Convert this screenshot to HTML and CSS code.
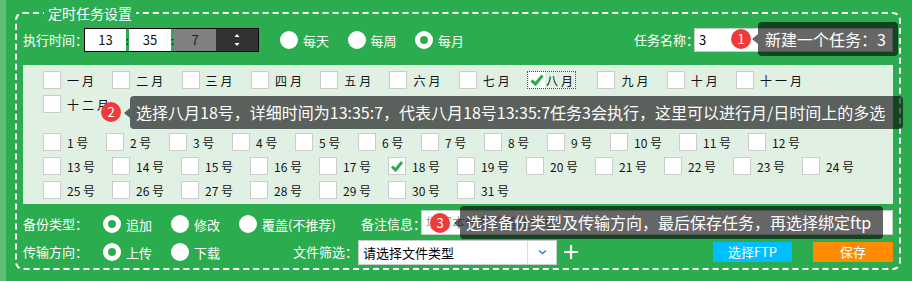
FILE: index.html
```
<!DOCTYPE html>
<html lang="zh-CN">
<head>
    <meta charset="UTF-8">
    <title>定时任务设置</title>
    <link rel="stylesheet" href="styles.css">
</head>
<body>
<div class="page">
    <div class="stripe"></div>

    <fieldset class="task-box">
        <legend>定时任务设置</legend>

        <!-- Time + frequency + name -->
        <div class="top-row">
            <span class="lbl lbl-time">执行时间：</span>
            <div class="time-box">
                <span class="seg">13</span><span class="sep">:</span><span class="seg">35</span><span class="sep">:</span><span class="seg gray">7</span>
                <span class="spin">
                    <svg width="42" height="22" viewBox="0 0 42 22"><path d="M21 5 L23.5 8 L18.5 8 Z" fill="#fff"/><path d="M21 17 L23.5 14 L18.5 14 Z" fill="#fff"/></svg>
                </span>
            </div>
            <div class="freq">
                <label class="opt"><span class="radio"></span>每天</label>
                <label class="opt"><span class="radio"></span>每周</label>
                <label class="opt"><span class="radio on"></span>每月</label>
            </div>
            <span class="lbl lbl-name">任务名称：</span>
            <div class="field name-field">3</div>
        </div>

        <!-- Month / day picker -->
        <div class="date-panel">
            <div class="chk-row">
                <label class="month"><span class="box"></span>一月</label>
                <label class="month"><span class="box"></span>二月</label>
                <label class="month"><span class="box"></span>三月</label>
                <label class="month"><span class="box"></span>四月</label>
                <label class="month"><span class="box"></span>五月</label>
                <label class="month"><span class="box"></span>六月</label>
                <label class="month"><span class="box"></span>七月</label>
                <label class="month focus"><span class="box on"><svg width="16" height="16" viewBox="0 0 16 16"><path d="M2.5 8.5 L6.5 12 L13.5 3.5" fill="none" stroke="#2bad4f" stroke-width="3"/></svg></span>八月</label>
                <label class="month"><span class="box"></span>九月</label>
                <label class="month"><span class="box"></span>十月</label>
                <label class="month"><span class="box"></span>十一月</label>
            </div>
            <div class="chk-row">
                <label class="month"><span class="box"></span>十二月</label>
            </div>

            <div class="days">
                <div class="chk-row">
                    <label class="day"><span class="box"></span>1 号</label>
                    <label class="day"><span class="box"></span>2 号</label>
                    <label class="day"><span class="box"></span>3 号</label>
                    <label class="day"><span class="box"></span>4 号</label>
                    <label class="day"><span class="box"></span>5 号</label>
                    <label class="day"><span class="box"></span>6 号</label>
                    <label class="day"><span class="box"></span>7 号</label>
                    <label class="day"><span class="box"></span>8 号</label>
                    <label class="day"><span class="box"></span>9 号</label>
                    <label class="day dd"><span class="box"></span>10 号</label>
                    <label class="day dd"><span class="box"></span>11 号</label>
                    <label class="day dd"><span class="box"></span>12 号</label>
                </div>
                <div class="chk-row">
                    <label class="day dd"><span class="box"></span>13 号</label>
                    <label class="day dd"><span class="box"></span>14 号</label>
                    <label class="day dd"><span class="box"></span>15 号</label>
                    <label class="day dd"><span class="box"></span>16 号</label>
                    <label class="day dd"><span class="box"></span>17 号</label>
                    <label class="day dd"><span class="box on"><svg width="16" height="16" viewBox="0 0 16 16"><path d="M3 8.5 L6.5 12 L13 4" fill="none" stroke="#2bad4f" stroke-width="3"/></svg></span>18 号</label>
                    <label class="day dd"><span class="box"></span>19 号</label>
                    <label class="day dd"><span class="box"></span>20 号</label>
                    <label class="day dd"><span class="box"></span>21 号</label>
                    <label class="day dd"><span class="box"></span>22 号</label>
                    <label class="day dd"><span class="box"></span>23 号</label>
                    <label class="day dd"><span class="box"></span>24 号</label>
                </div>
                <div class="chk-row">
                    <label class="day dd"><span class="box"></span>25 号</label>
                    <label class="day dd"><span class="box"></span>26 号</label>
                    <label class="day dd"><span class="box"></span>27 号</label>
                    <label class="day dd"><span class="box"></span>28 号</label>
                    <label class="day dd"><span class="box"></span>29 号</label>
                    <label class="day dd"><span class="box"></span>30 号</label>
                    <label class="day dd"><span class="box"></span>31 号</label>
                </div>
            </div>
        </div>

        <!-- Backup type + note -->
        <div class="opt-row first">
            <span class="lbl lbl-row">备份类型：</span>
            <div class="opts backup">
                <label class="opt"><span class="radio on"></span>追加</label>
                <label class="opt"><span class="radio"></span>修改</label>
                <label class="opt"><span class="radio"></span>覆盖(不推荐)</label>
            </div>
            <span class="lbl lbl-note">备注信息：</span>
            <div class="field note-field">填写本任务的备注信息</div>
        </div>

        <!-- Direction + filter + buttons -->
        <div class="opt-row">
            <span class="lbl lbl-row">传输方向：</span>
            <div class="opts dir">
                <label class="opt"><span class="radio on"></span>上传</label>
                <label class="opt"><span class="radio"></span>下载</label>
            </div>
            <span class="lbl lbl-filter">文件筛选：</span>
            <div class="select">
                <span class="select-text">请选择文件类型</span>
                <span class="select-arrow">
                    <svg width="9" height="6" viewBox="0 0 9 6"><path d="M1 1.5 L4.5 4.5 L8 1.5" fill="none" stroke="#3b7fd6" stroke-width="1.5"/></svg>
                </span>
            </div>
            <svg class="plus" width="16" height="16" viewBox="0 0 16 16"><path d="M8 1 V15 M1 8 H15" stroke="#fff" stroke-width="2.2"/></svg>
            <button class="btn btn-ftp">选择FTP</button>
            <button class="btn btn-save">保存</button>
        </div>
    </fieldset>

    <!-- Guide tooltips -->
    <span class="badge b1">1</span>
    <div class="tip t1">新建一个任务：3</div>
    <span class="badge b2">2</span>
    <div class="tip t2">选择八月18号，详细时间为13:35:7，代表八月18号13:35:7任务3会执行，这里可以进行月/日时间上的多选</div>
    <span class="badge b3">3</span>
    <div class="tip t3">选择备份类型及传输方向，最后保存任务，再选择绑定ftp</div>
</div>
</body>
</html>
```

FILE: styles.css
```
* {
    margin: 0;
    padding: 0;
    box-sizing: border-box;
}

body {
    font-family: "Microsoft YaHei", "Noto Sans CJK SC", sans-serif;
    font-size: 13px;
    color: white;
    background-color: #2bad4f;
}

.page {
    position: relative;
    display: flex;
    width: 912px;
    height: 281px;
    overflow: hidden;
}

.stripe {
    width: 6px;
    background-color: #5ebf78;
}

/* Dashed group box */
.task-box {
    flex: 1;
    min-width: 0;
    margin: 3px 11px 0 9px;
    padding: 2px 6px 2px;
    border: 2px dashed white;
    border-radius: 8px;
    align-self: flex-start;
}

.task-box legend {
    margin-left: 21px;
    padding: 0 4px;
    font-size: 14px;
    line-height: 20px;
}

.lbl {
    white-space: nowrap;
    line-height: 20px;
}

/* Top row */
.top-row {
    display: flex;
    align-items: center;
    height: 30px;
}

.lbl-time {
    width: 61px;
}

.time-box {
    display: flex;
    width: 175px;
    height: 24px;
    border: 1px solid black;
    background-color: #2bad4f;
}

.seg {
    width: 42px;
    background-color: white;
    color: #111;
    text-align: center;
    line-height: 22px;
}

.seg:first-child {
    width: 41px;
}

.seg.gray {
    background-color: #808080;
    color: #222;
}

.sep {
    width: 3px;
    color: black;
    font-size: 11px;
    line-height: 22px;
    display: flex;
    justify-content: center;
}

.spin {
    width: 42px;
    background-color: #333;
    display: flex;
}

.freq {
    display: flex;
    margin-left: 21px;
}

.freq .opt {
    width: 67.5px;
}

.opt {
    display: flex;
    align-items: center;
    white-space: nowrap;
}

.radio {
    width: 18px;
    height: 18px;
    border-radius: 50%;
    background-color: white;
    margin-right: 5px;
    flex-shrink: 0;
}

.radio.on {
    background-color: transparent;
    border: 5px solid white;
}

.lbl-name {
    margin-left: auto;
    width: 60px;
}

.field {
    height: 24px;
    background-color: white;
    border: 1px solid #ccc;
    color: black;
    padding-left: 4px;
    line-height: 22px;
}

.name-field {
    width: 199px;
}

/* Month / day panel */
.date-panel {
    margin-top: 10px;
    padding: 3px 20px 2px;
    background-color: #e0f1e4;
    color: #111;
    font-size: 12px;
}

.chk-row {
    display: flex;
    height: 24px;
    align-items: center;
}

.days {
    margin-top: 14px;
}

.month, .day {
    display: flex;
    align-items: center;
    white-space: nowrap;
    height: 18px;
}

.month {
    width: 69.3px;
    letter-spacing: 3px;
}

.day {
    width: 63px;
}

.day.dd {
    width: 69px;
}

.box {
    width: 18px;
    height: 18px;
    border: 1px solid #ccc;
    background-color: white;
    margin-right: 6px;
    flex-shrink: 0;
    display: flex;
    align-items: center;
    justify-content: center;
}

/* focused month item: dotted outline round box + label */
.month.focus {
    width: 47px;
    height: 16px;
    margin-right: 22.3px;
    outline: 1px dotted #555;
}

.month.focus .box {
    width: 16px;
    height: 16px;
    margin: 0 1px;
    border: none;
}

/* Bottom rows */
.opt-row {
    display: flex;
    align-items: center;
    height: 28px;
}

.opt-row.first {
    margin-top: 6px;
}

.lbl-row {
    width: 80px;
}

.opts {
    display: flex;
}

.opts .opt {
    width: 68px;
}

.opts.backup {
    width: 258px;
}

.opts.dir {
    width: 190px;
}

.lbl-note {
    width: 60px;
}

.note-field {
    flex: 1;
    height: 25px;
    margin-top: -4px;
    color: #999;
}

.lbl-filter {
    width: 65px;
}

.select {
    display: flex;
    width: 199px;
    height: 25px;
    background-color: white;
    border: 1px solid #ccc;
    color: black;
}

.select-text {
    flex: 1;
    padding-left: 4px;
    line-height: 23px;
}

.select-arrow {
    width: 29px;
    border-left: 1px solid #ddd;
    display: flex;
    align-items: center;
    justify-content: center;
}

.plus {
    margin-left: 6px;
}

.btn {
    height: 20px;
    border: none;
    color: white;
    font-family: inherit;
    font-size: 13px;
    line-height: 20px;
}

.btn-ftp {
    width: 79px;
    margin-left: auto;
    background-color: #00bfff;
}

.btn-save {
    width: 80px;
    margin-left: 21px;
    background-color: #ff8c00;
}

/* Guide tooltips and number badges */
.tip {
    position: absolute;
    background-color: rgba(0, 0, 0, 0.6);
    border-radius: 4px;
    font-size: 16px;
    white-space: nowrap;
    color: white;
    padding-left: 6px;
}

.tip::before {
    content: "";
    position: absolute;
    left: -6px;
    top: 50%;
    margin-top: -5px;
    border-top: 5px solid transparent;
    border-bottom: 5px solid transparent;
    border-right: 6px solid rgba(0, 0, 0, 0.6);
}

.t1 {
    left: 758px;
    top: 22px;
    width: 140px;
    height: 34px;
    line-height: 34px;
    padding-left: 7px;
}

.t2 {
    left: 130px;
    top: 96px;
    width: 773px;
    height: 33px;
    line-height: 33px;
}

.t3 {
    left: 460px;
    top: 206px;
    width: 423px;
    height: 33px;
    line-height: 33px;
}

.badge {
    position: absolute;
    width: 20px;
    height: 20px;
    border-radius: 50%;
    background-color: #f03a3a;
    color: white;
    font-size: 13px;
    line-height: 20px;
    text-align: center;
}

.b1 {
    left: 731px;
    top: 29px;
}

.b2 {
    left: 101px;
    top: 102px;
}

.b3 {
    left: 430px;
    top: 213px;
}
```
